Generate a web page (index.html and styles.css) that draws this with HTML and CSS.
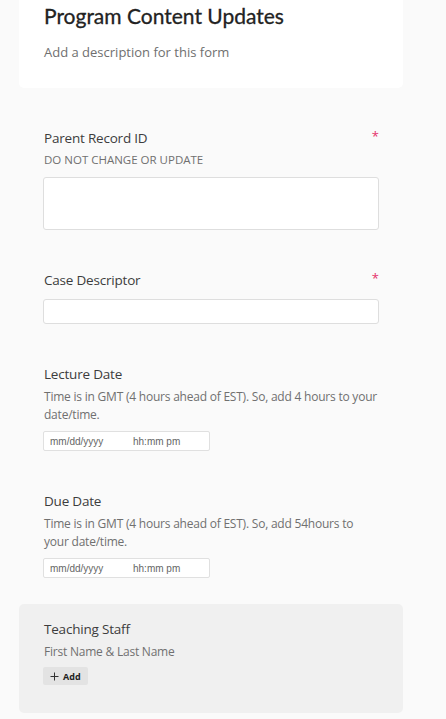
FILE: index.html
```html
<!DOCTYPE html>
<html lang="en">
<head>
<meta charset="utf-8">
<title>Program Content Updates</title>
<link rel="stylesheet" href="styles.css">
</head>
<body>
<div class="form">
  <div class="header">
    <h1 class="title">Program Content Updates</h1>
    <p class="form-desc">Add a description for this form</p>
  </div>

  <div class="field field-first">
    <div class="label-row"><span class="label">Parent Record ID</span><span class="req">*</span></div>
    <div class="sublabel caps">DO NOT CHANGE OR UPDATE</div>
    <div class="textarea"></div>
  </div>

  <div class="field">
    <div class="label-row"><span class="label">Case Descriptor</span><span class="req">*</span></div>
    <div class="text-input"></div>
  </div>

  <div class="field">
    <div class="label-row"><span class="label">Lecture Date</span></div>
    <div class="sublabel">Time is in GMT (4 hours ahead of EST). So, add 4 hours to your date/time.</div>
    <div class="date-input"><span class="date-part">mm/dd/yyyy</span><span class="time-part">hh:mm pm</span></div>
  </div>

  <div class="field">
    <div class="label-row"><span class="label">Due Date</span></div>
    <div class="sublabel">Time is in GMT (4 hours ahead of EST). So, add 54hours to your date/time.</div>
    <div class="date-input"><span class="date-part">mm/dd/yyyy</span><span class="time-part">hh:mm pm</span></div>
  </div>

  <div class="group">
    <div class="label-row"><span class="label">Teaching Staff</span></div>
    <div class="sublabel">First Name &amp; Last Name</div>
    <button class="add-btn" type="button"><svg class="plus" width="9" height="9" viewBox="0 0 9 9"><path d="M4.5 0.5v8M0.5 4.5h8" stroke="#333" stroke-width="1" fill="none"/></svg><span>Add</span></button>
  </div>
</div>
</body>
</html>
```

FILE: styles.css
```css
html, body {
  margin: 0;
  padding: 0;
  background: #fafafa;
}
body {
  font-family: "Open Sans", "Noto Sans", sans-serif;
  color: #444;
}
*, *::before, *::after {
  box-sizing: border-box;
}
.form {
  width: 384px;
  margin-left: 19px;
  display: flex;
  flex-direction: column;
}
.header {
  background: #fff;
  border-radius: 0 0 5px 5px;
  padding: 2px 24px 26px 25px;
}
.title {
  margin: 0;
  font-family: "Lato", sans-serif;
  font-weight: 400;
  font-size: 21px;
  line-height: 28px;
  color: #222;
  -webkit-text-stroke: 0.3px #222;
}
.form-desc {
  margin: 12px 0 0;
  font-size: 13px;
  line-height: 20px;
  color: #6f6f6f;
}
.field {
  padding: 40px 24px 0;
  display: flex;
  flex-direction: column;
}
.label-row {
  display: flex;
  justify-content: space-between;
  align-items: flex-start;
  padding-left: 1px;
  height: 20px;
}
.label {
  font-size: 13.5px;
  line-height: 20px;
  letter-spacing: -0.2px;
  color: #3d3d3d;
}
.req {
  color: #e5326a;
  font-size: 13px;
  line-height: 20px;
  margin-right: 0;
  margin-top: -2px;
}
.sublabel {
  margin-top: 4px;
  padding-left: 1px;
  font-size: 12px;
  line-height: 18px;
  letter-spacing: -0.22px;
  color: #707070;
}
.sublabel.caps {
  font-size: 11.5px;
  letter-spacing: 0;
  line-height: 18px;
  margin-top: 3px;
}
.textarea {
  margin-top: 8px;
  height: 53px;
  background: #fff;
  border: 1px solid #dedede;
  border-radius: 3px;
}
.text-input {
  margin-top: 9px;
  height: 25px;
  background: #fff;
  border: 1px solid #dedede;
  border-radius: 3px;
}
.date-input {
  margin-top: 7px;
  width: 167px;
  height: 20px;
  background: #fff;
  border: 1px solid #e0e0e0;
  border-radius: 2px;
  display: flex;
  align-items: center;
  font-family: "Liberation Sans", Arial, sans-serif;
  font-size: 10px;
  color: #666;
}
.date-part {
  margin-left: 6px;
  width: 83px;
}
.group {
  margin-top: 26px;
  background: #f0f0f0;
  border-radius: 5px;
  padding: 15px 24px 28px;
  display: flex;
  flex-direction: column;
  align-items: flex-start;
}
.group .label-row {
  align-self: stretch;
}
.add-btn {
  margin-top: 6px;
  height: 18px;
  width: 45px;
  padding: 0 0 0 7px;
  border: none;
  border-radius: 2px;
  background: #e3e3e3;
  display: flex;
  align-items: center;
  gap: 4px;
  font-family: "Open Sans", sans-serif;
  font-weight: 700;
  font-size: 9px;
  color: #222;
}
.plus {
  display: block;
}
```
